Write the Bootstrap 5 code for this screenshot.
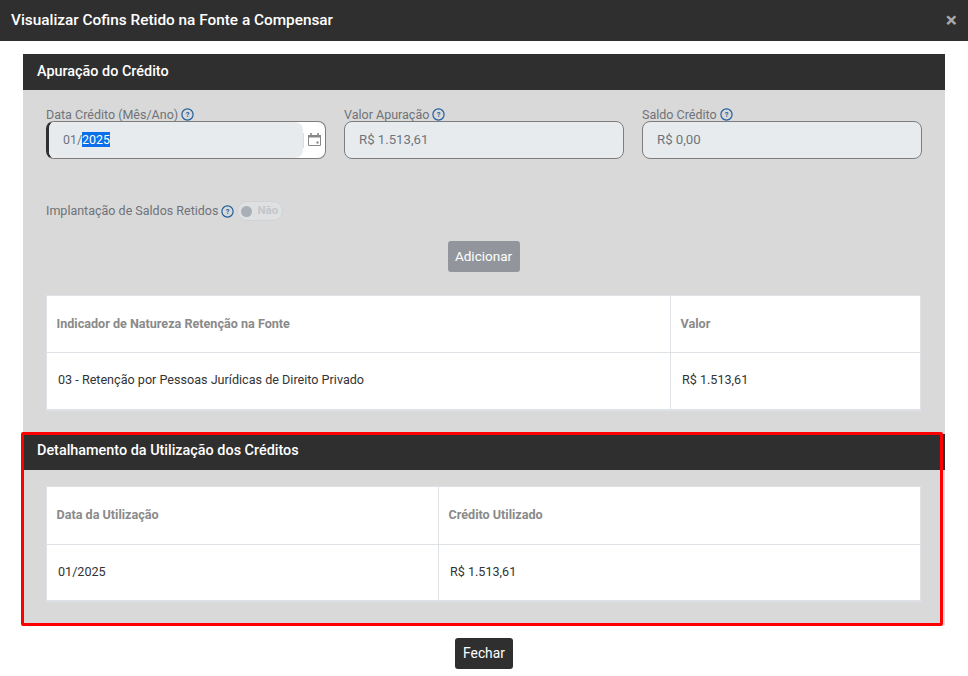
<!DOCTYPE html>
<html lang="pt-BR"><head><meta charset="utf-8"><title>Visualizar</title>
<link rel="stylesheet" href="https://cdn.jsdelivr.net/npm/bootstrap@5.3.0/dist/css/bootstrap.min.css">
<style>
html,body{height:676px;overflow:hidden;background:#fff}
body{font-family:Roboto,"Liberation Sans",sans-serif;font-size:14px;color:#333}
.top-bar{height:41px;background:#2f2f2f;color:#fff;padding:0 11px;font-weight:500;font-size:15.35px}
.top-x{color:#a9a9a9;font-size:21px;font-weight:700;line-height:1;margin-top:-1px}
.stage{padding:13px 23px 0 23px}
.panel-head{height:36px;background:#2f2f2f;color:#fff;font-weight:500;font-size:14.4px;padding:0 14px 1px}
.panel-wrap{background:#d9d9d9;width:922px}
.panel-one-body{padding:16px 24px 23px 23px}
.fields{display:grid;grid-template-columns:280px 280px 280px;gap:18px}
.fld-label{font-size:12.5px;color:#6f7378;line-height:16px;height:15px;padding-top:2px;display:flex;align-items:center;gap:3px;white-space:nowrap}
.fld-box{height:38px;border:1px solid #7d7d7d;border-radius:8px;background:#e8ebee;color:#6c757d;padding:0 14px;font-size:13.2px}
.date-box{background:#fff;border-left:3px solid #2f2f2f;padding:0;overflow:hidden}
.date-in{flex:1;height:100%;background:#e8ebee;padding-left:14px;border-radius:0 8px 8px 0;font-size:12.4px}
.date-sel{background:#0a6fe8;color:#fff}
.date-ic{width:22px;flex:none;border-left:1px solid #ddd;padding-right:1px;padding-bottom:2px}
.switch-line{margin-top:42px;height:20px;gap:3px;font-size:12.5px;color:#6f7378}
.sw{width:46px;height:20px;border:1px solid #d0d2d5;border-radius:10px;background:#dfe0e2;color:#c3c6ca;font-size:11.5px;font-weight:700;gap:5px;padding-left:3px}
.sw-dot{width:11px;height:11px;border-radius:50%;background:#a9afb6}
.btn-add{background:#92969c;color:#fff;font-size:13.5px;height:31px;width:72px;padding:0;border:0;border-radius:3px;margin-top:20px;margin-bottom:23px}
.btn-add:hover{background:#92969c;color:#fff}
.add-row{width:875px}
.tbl{background:#fff;border:1px solid #dee2e6;border-bottom-width:2px;width:875px;margin:0;table-layout:fixed;border-collapse:collapse}
.tbl th{color:#8a8a8a;font-weight:700;font-size:12.6px;padding:0 9.5px;height:57px;border:1px solid #dee2e6;vertical-align:middle;background:#fff}
.tbl td{color:#333;font-size:12.6px;padding:0 11px;height:57px;border:1px solid #dee2e6;vertical-align:middle;background:#fff}
.panel-two .tbl th{height:58px}
.panel-two-body{padding:16px 24px 23px 23px}
.red-mark{top:378px;left:-2px;width:922px;height:194px;border:3px solid #f00;border-radius:2px;pointer-events:none}
.foot{margin-top:13px}
.btn-close-dark{background:#2f2f2f;color:#fff;font-size:13.8px;height:31px;width:58px;padding:0;border:0;border-radius:3px}
.btn-close-dark:hover{background:#2f2f2f;color:#fff}
</style></head><body>
<svg width="0" height="0" class="position-absolute"><defs><symbol id="q" viewBox="0 0 13 13"><circle cx="6.5" cy="6.5" r="5.6" fill="none" stroke="#1f5f9e" stroke-width="1.2"/><text x="6.5" y="9.2" text-anchor="middle" font-size="7.5" font-weight="700" font-family="Roboto" fill="#1f5f9e">?</text></symbol></defs></svg>
<div class="top-bar d-flex align-items-center justify-content-between"><span>Visualizar Cofins Retido na Fonte a Compensar</span><span class="top-x">×</span></div>
<div class="stage">
<div class="panel-wrap position-relative">
<section>
<div class="panel-head d-flex align-items-center">Apuração do Crédito</div>
<div class="panel-one-body">
<div class="fields">
<div><div class="fld-label">Data Crédito (Mês/Ano) <svg width="13" height="13"><use href="#q"/></svg></div>
<div class="fld-box date-box d-flex align-items-center"><div class="date-in d-flex align-items-center"><span>01/<span class="date-sel">2025</span></span></div><div class="date-ic d-flex justify-content-center align-items-center"><svg width="13" height="13" viewBox="0 0 13 13"><path d="M.5 2.5h12v10H.5z" fill="none" stroke="#888"/><path d="M0 2h13v2.5H0z" fill="#888"/><path d="M3 0v3M10 0v3" stroke="#888" stroke-width="1.6"/><rect x="8.5" y="8.5" width="2" height="2" fill="#777"/></svg></div></div></div>
<div><div class="fld-label">Valor Apuração <svg width="13" height="13"><use href="#q"/></svg></div><div class="fld-box d-flex align-items-center">R$ 1.513,61</div></div>
<div><div class="fld-label">Saldo Crédito <svg width="13" height="13"><use href="#q"/></svg></div><div class="fld-box d-flex align-items-center">R$ 0,00</div></div>
</div>
<div class="switch-line d-flex align-items-center">Implantação de Saldos Retidos <svg width="13" height="13"><use href="#q"/></svg><span class="sw d-inline-flex align-items-center"><span class="sw-dot"></span>Não</span></div>
<div class="text-center add-row"><button class="btn btn-add">Adicionar</button></div>
<table class="tbl"><colgroup><col style="width:624px"><col></colgroup>
<tr><th>Indicador de Natureza Retenção na Fonte</th><th>Valor</th></tr>
<tr><td>03 - Retenção por Pessoas Jurídicas de Direito Privado</td><td>R$ 1.513,61</td></tr></table>
</div></section>
<section class="panel-two">
<div class="panel-head d-flex align-items-center">Detalhamento da Utilização dos Créditos</div>
<div class="panel-two-body">
<table class="tbl"><colgroup><col style="width:392px"><col></colgroup>
<tr><th>Data da Utilização</th><th>Crédito Utilizado</th></tr>
<tr><td>01/2025</td><td>R$ 1.513,61</td></tr></table>
</div></section>
<div class="red-mark position-absolute"></div>
</div>
<div class="foot text-center"><button class="btn btn-close-dark">Fechar</button></div>
</div>
<script src="https://cdn.jsdelivr.net/npm/bootstrap@5.3.0/dist/js/bootstrap.bundle.min.js"></script>
</body></html>
